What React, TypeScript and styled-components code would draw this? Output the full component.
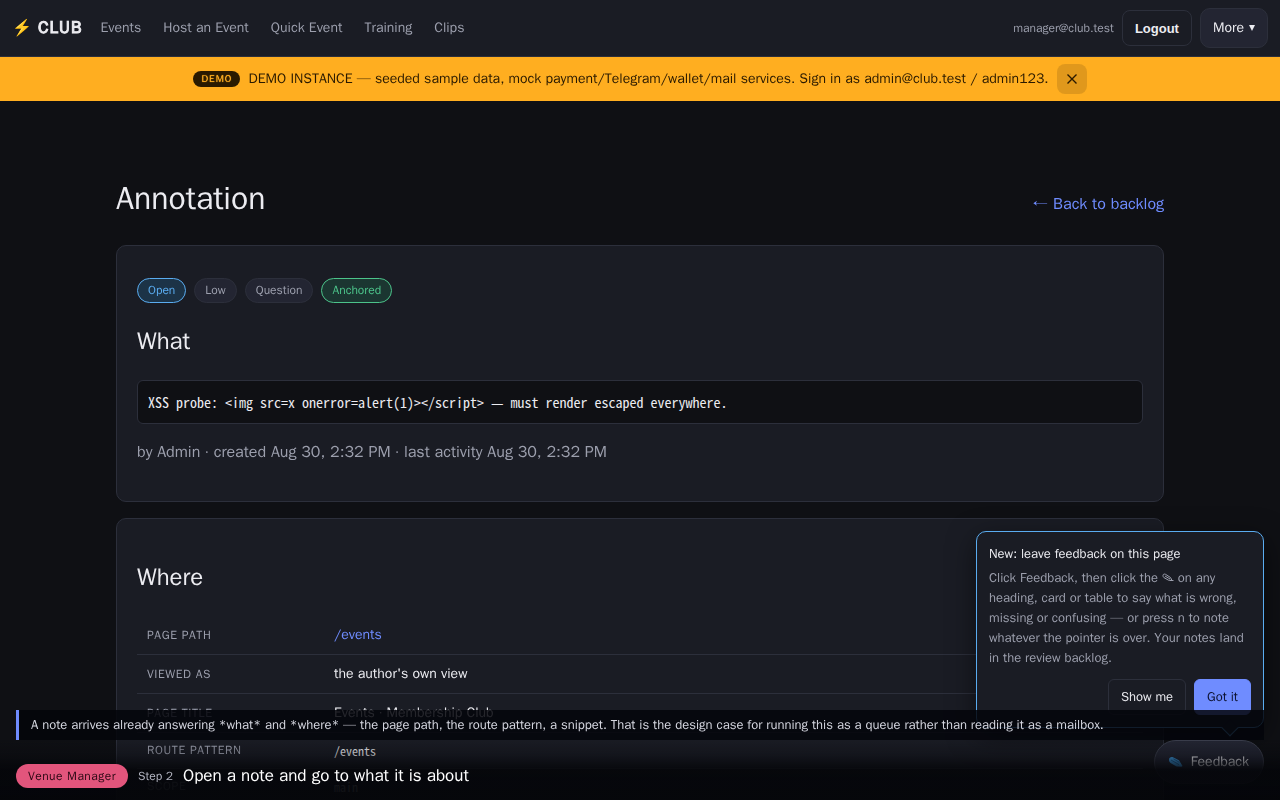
import React, { useState } from "react";
import styled, { createGlobalStyle, css } from "styled-components";

const sans = `"WenQuanYi Zen Hei", "Liberation Sans", Arial, sans-serif`;
const mono = `"Noto Sans Mono CJK JP", "Liberation Mono", monospace`;

const color = {
  page: "#0f1014",
  surface: "#1a1c24",
  raised: "#232532",
  line: "#2c2f3b",
  text: "#ececf1",
  muted: "#9c9fad",
  accent: "#6f8cff",
  info: "#5aacf0",
  success: "#4cc38a",
  warning: "#ffae20",
};

const GlobalStyle = createGlobalStyle`
  *, *::before, *::after { box-sizing: border-box; }
  body {
    margin: 0;
    background: ${color.page};
    color: ${color.text};
    font-family: ${sans};
    font-size: 16px;
    line-height: 24px;
  }
  h1, h2, p { margin: 0; font-weight: 400; }
  a { color: ${color.accent}; text-decoration: none; }
  button { font-family: inherit; cursor: pointer; }
`;

const Header = styled.header`
  display: flex;
  align-items: center;
  min-height: 57px;
  padding: 0 12px;
  background: ${color.surface};
  border-bottom: 1px solid ${color.line};
`;

const Brand = styled.a`
  display: flex;
  align-items: center;
  gap: 6px;
  margin-right: 18px;
  color: ${color.text};
  font-size: 17px;
  letter-spacing: 1px;
  -webkit-text-stroke: 1px;
`;

const Bolt = styled.span`
  width: 20px;
  font-size: 16px;
  letter-spacing: 0;
  text-align: center;
  -webkit-text-stroke: 0;
`;

const Nav = styled.nav`
  display: flex;
  gap: 22px;
  flex: 1;
`;

const NavLink = styled.a`
  color: ${color.muted};
  font-size: 14px;
`;

const Account = styled.div`
  display: flex;
  align-items: center;
  gap: 8px;
`;

const Email = styled.span`
  color: ${color.muted};
  font-size: 12px;
`;

const LogoutButton = styled.button`
  height: 36px;
  padding: 0 12px;
  background: transparent;
  border: 1px solid ${color.line};
  border-radius: 8px;
  color: ${color.text};
  font: 700 13px "Liberation Sans", Arial, sans-serif;
`;

const MoreButton = styled.button`
  display: flex;
  align-items: center;
  gap: 5px;
  height: 40px;
  padding: 0 12px;
  background: ${color.raised};
  border: 1px solid ${color.line};
  border-radius: 10px;
  color: ${color.text};
  font-size: 14px;
`;

const Caret = styled.svg`
  width: 6px;
  height: 6px;
  fill: currentColor;
`;

const Banner = styled.div`
  display: flex;
  align-items: center;
  justify-content: center;
  gap: 8px;
  padding: 7px 12px;
  background: ${color.warning};
  color: #2a1a00;
  font-size: 14px;
`;

const DemoTag = styled.span`
  padding: 0 8px;
  background: #2a1a00;
  border-radius: 8px;
  color: ${color.warning};
  font-size: 10px;
  letter-spacing: 1px;
  line-height: 16px;
  text-shadow: 0 0 1px ${color.warning};
`;

const DismissButton = styled.button`
  display: grid;
  place-items: center;
  width: 30px;
  height: 30px;
  padding: 0;
  background: rgba(0, 0, 0, 0.12);
  border: 0;
  border-radius: 8px;
  color: #2a1a00;

  svg {
    width: 10px;
    height: 10px;
    stroke: currentColor;
    stroke-width: 1.4;
  }
`;

const Main = styled.main`
  max-width: 1080px;
  margin: 0 auto;
  padding: 78px 16px 80px;
`;

const TitleRow = styled.div`
  display: flex;
  align-items: baseline;
  justify-content: space-between;
  margin-bottom: 26px;
`;

const Title = styled.h1`
  font-size: 32px;
  line-height: 40px;
`;

const Card = styled.section`
  margin-bottom: 16px;
  padding: 32px 20px;
  background: ${color.surface};
  border: 1px solid ${color.line};
  border-radius: 10px;
`;

const SectionTitle = styled.h2<{ $spaced?: boolean }>`
  margin-top: ${(p) => (p.$spaced ? "10px" : "0")};
  font-size: 24px;
  line-height: 32px;
`;

const Badges = styled.div`
  display: flex;
  gap: 8px;
  margin-bottom: 22px;
`;

type Tone = "plain" | "info" | "success";

const tones = {
  plain: css`
    background: ${color.raised};
    border-color: ${color.line};
    color: ${color.muted};
  `,
  info: css`
    background: #1c3347;
    border-color: ${color.info};
    color: ${color.info};
  `,
  success: css`
    background: #1b3631;
    border-color: ${color.success};
    color: ${color.success};
  `,
};

const Badge = styled.span<{ $tone: Tone }>`
  padding: 0 10px;
  border: 1px solid;
  border-radius: 13px;
  font-size: 12px;
  line-height: 23px;
  ${(p) => tones[p.$tone]}
`;

const Quote = styled.pre`
  margin: 23px 0 16px;
  padding: 10px;
  background: ${color.page};
  border: 1px solid ${color.line};
  border-radius: 6px;
  font-family: ${mono};
  font-size: 14px;
  line-height: 22px;
  white-space: pre-wrap;
`;

const Meta = styled.p`
  margin-bottom: 5px;
  color: ${color.muted};
`;

const Facts = styled.table`
  width: 100%;
  margin-top: 23px;
  border-collapse: collapse;
`;

const FactRow = styled.tr`
  border-bottom: 1px solid ${color.line};
`;

const FactName = styled.th`
  width: 187px;
  padding: 9px 10px;
  color: ${color.muted};
  font-size: 12px;
  font-weight: 400;
  letter-spacing: 0.05em;
  line-height: 17px;
  text-align: left;
  text-transform: uppercase;
`;

const FactValue = styled.td<{ $code?: boolean }>`
  padding: 9px 10px;
  font-size: 14px;
  line-height: 20px;
  ${(p) =>
    p.$code &&
    css`
      font-family: ${mono};
      font-size: 12px;
      line-height: 17px;
    `}
`;

const Hint = styled.aside`
  position: fixed;
  right: 16px;
  bottom: 72px;
  width: 288px;
  padding: 12px;
  background: ${color.surface};
  border: 1px solid ${color.info};
  border-radius: 10px;
  box-shadow: 0 8px 28px rgba(0, 0, 0, 0.5);
  font-size: 13px;
  line-height: 20px;

  &::after {
    content: "";
    position: absolute;
    right: 27px;
    bottom: -7px;
    width: 12px;
    height: 12px;
    background: ${color.surface};
    border: solid ${color.info};
    border-width: 0 1px 1px 0;
    transform: rotate(45deg);
  }
`;

const HintText = styled.p`
  margin: 4px 0 11px;
  color: ${color.muted};
`;

const HintActions = styled.div`
  display: flex;
  justify-content: flex-end;
  gap: 8px;
`;

const HintButton = styled.button<{ $primary?: boolean }>`
  height: 36px;
  padding: 0 12px;
  background: ${(p) => (p.$primary ? color.accent : "transparent")};
  border: 1px solid ${(p) => (p.$primary ? color.accent : color.line)};
  border-radius: 6px;
  color: ${(p) => (p.$primary ? "#0d1230" : color.text)};
  font-size: 13px;
`;

const InlinePencil = styled.svg`
  width: 12px;
  height: 9px;
  fill: none;
  stroke: currentColor;
`;

const FeedbackButton = styled.button`
  position: fixed;
  right: 16px;
  bottom: 16px;
  display: flex;
  align-items: center;
  gap: 8px;
  height: 44px;
  padding: 0 14px;
  background: ${color.raised};
  border: 1px solid #3a3d4b;
  border-radius: 22px;
  color: ${color.text};
  font-size: 14px;

  svg {
    width: 14px;
    height: 12px;
  }
`;

const Narration = styled.footer`
  position: fixed;
  inset: auto 0 0;
`;

const Caption = styled.p`
  margin: 0 16px;
  padding: 0 12px;
  background: rgba(4, 5, 10, 0.86);
  border-left: 3px solid ${color.accent};
  color: #d5d7e0;
  font-size: 13px;
  line-height: 30px;
`;

const StepRow = styled.div`
  display: flex;
  align-items: center;
  gap: 10px;
  padding: 24px 16px 12px;
  background: linear-gradient(
    to bottom,
    rgba(5, 6, 10, 0),
    rgba(5, 6, 10, 0.3) 25%,
    rgba(5, 6, 10, 0.75) 44%,
    rgba(5, 6, 10, 0.92) 50%,
    rgba(5, 6, 10, 0.96)
  );
`;

const Role = styled.span`
  padding: 0 12px;
  background: #e2557c;
  border-radius: 12px;
  color: #2b0814;
  font-size: 12px;
  letter-spacing: 0.04em;
  line-height: 24px;
`;

const StepNumber = styled.span`
  color: #b4b6c2;
  font-size: 12px;
`;

const StepName = styled.span`
  color: #fff;
  font-size: 17px;
`;

const badges: { label: string; tone: Tone }[] = [
  { label: "Open", tone: "info" },
  { label: "Low", tone: "plain" },
  { label: "Question", tone: "plain" },
  { label: "Anchored", tone: "success" },
];

const facts: { name: string; value: React.ReactNode; code?: boolean }[] = [
  { name: "Page path", value: <a href="#events">/events</a> },
  { name: "Viewed as", value: "the author's own view" },
  { name: "Page title", value: "Events · Membership Club" },
  { name: "Route pattern", value: "/events", code: true },
  { name: "Scope", value: "main", code: true },
];

export default function App() {
  const [banner, setBanner] = useState(true);
  const [hint, setHint] = useState(true);

  return (
    <>
      <GlobalStyle />
      <Header>
        <Brand href="#home">
          <Bolt>⚡</Bolt>CLUB
        </Brand>
        <Nav>
          {["Events", "Host an Event", "Quick Event", "Training", "Clips"].map((item) => (
            <NavLink href="#nav" key={item}>{item}</NavLink>
          ))}
        </Nav>
        <Account>
          <Email>manager@club.test</Email>
          <LogoutButton>Logout</LogoutButton>
          <MoreButton>
            More
            <Caret viewBox="0 0 6 6" aria-hidden="true"><path d="M0 0h6L3 6z" /></Caret>
          </MoreButton>
        </Account>
      </Header>

      {banner && (
        <Banner>
          <DemoTag>DEMO</DemoTag>
          <span>
            DEMO INSTANCE — seeded sample data, mock payment/Telegram/wallet/mail services. Sign in as
            admin@club.test / admin123.
          </span>
          <DismissButton aria-label="Dismiss" onClick={() => setBanner(false)}>
            <svg viewBox="0 0 10 10" aria-hidden="true"><path d="M.5.5l9 9M9.500.5l-9 9" /></svg>
          </DismissButton>
        </Banner>
      )}

      <Main>
        <TitleRow>
          <Title>Annotation</Title>
          <a href="#backlog">← Back to backlog</a>
        </TitleRow>

        <Card>
          <Badges>
            {badges.map((b) => (
              <Badge $tone={b.tone} key={b.label}>{b.label}</Badge>
            ))}
          </Badges>
          <SectionTitle>What</SectionTitle>
          <Quote lang="en">
            {"XSS probe: <img src=x onerror=alert(1)></script> — must render escaped everywhere."}
          </Quote>
          <Meta>by Admin · created Aug 30, 2:32 PM · last activity Aug 30, 2:32 PM</Meta>
        </Card>

        <Card>
          <SectionTitle $spaced>Where</SectionTitle>
          <Facts>
            <tbody>
              {facts.map((f) => (
                <FactRow key={f.name}>
                  <FactName scope="row">{f.name}</FactName>
                  <FactValue $code={f.code}>{f.value}</FactValue>
                </FactRow>
              ))}
            </tbody>
          </Facts>
        </Card>
      </Main>

      {hint && (
        <Hint>
          <p>New: leave feedback on this page</p>
          <HintText>
            Click Feedback, then click the{" "}
            <InlinePencil viewBox="0 0 12 9" role="img" aria-label="pencil">
              <path d="M1 2.500C1 1 2.500.8 3.500 1.300L8.500 4.500 10 7.500 6.500 7.200 1.800 4.500C1.200 4 1 3.300 1 2.500zM3 3l5 3M8 7.500h3.500" />
            </InlinePencil>{" "}
            on any heading, card or table to say what is wrong, missing or
            confusing — or press n to note whatever the pointer is over. Your notes land in the review backlog.
          </HintText>
          <HintActions>
            <HintButton>Show me</HintButton>
            <HintButton $primary onClick={() => setHint(false)}>Got it</HintButton>
          </HintActions>
        </Hint>
      )}

      <FeedbackButton>
        <svg viewBox="0 0 14 12" aria-hidden="true">
          <path d="M0 3.500C0 1.500 2 .5 4 1.200l6 3L13.500 10l-1 .8-5-.4L1.500 7C.4 6.200 0 4.800 0 3.500z" fill="#3f9be0" />
          <path d="M2 4l8 4.600M4.500 2.800l6 3.600" stroke="#1d5c92" strokeWidth=".8" fill="none" />
        </svg>
        Feedback
      </FeedbackButton>

      <Narration>
        <Caption>
          A note arrives already answering *what* and *where* — the page path, the route pattern, a snippet. That
          is the design case for running this as a queue rather than reading it as a mailbox.
        </Caption>
        <StepRow>
          <Role>Venue Manager</Role>
          <StepNumber>Step 2</StepNumber>
          <StepName>Open a note and go to what it is about</StepName>
        </StepRow>
      </Narration>
    </>
  );
}
